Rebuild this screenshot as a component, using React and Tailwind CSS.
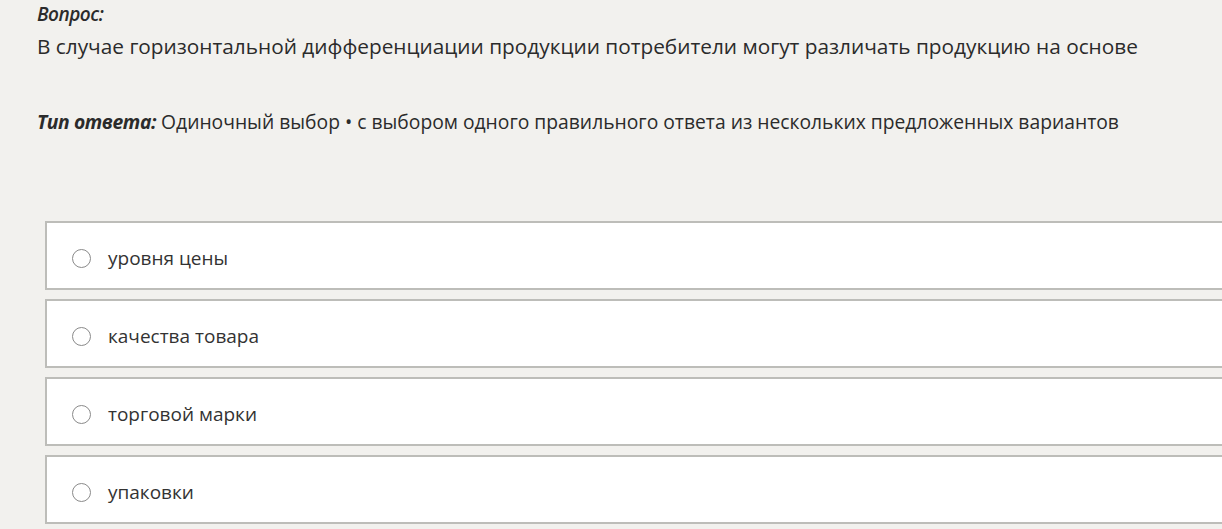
const OPTIONS = ['уровня цены', 'качества товара', 'торговой марки', 'упаковки']

export default function App() {
  return (
    <div
      className="w-[1222px] h-[529px] overflow-hidden bg-[#f2f1ee] text-[#2b2b2b]"
      style={{ fontFamily: '"Open Sans", "Noto Sans", sans-serif' }}
    >
      <div className="pl-[37px] pt-[1px]">
        <p className="text-[19px] leading-[26px] italic font-semibold tracking-[-0.5px]">Вопрос:</p>
        <p className="text-[20.8px] leading-[26px] mt-[6px]">
          В случае горизонтальной дифференциации продукции потребители могут различать продукцию на основе
        </p>
        <p className="text-[19.3px] leading-[26px] mt-[50px]">
          <span className="italic font-bold tracking-[-0.4px]">Тип ответа:</span> Одиночный выбор • с выбором одного правильного ответа из нескольких предложенных вариантов
        </p>
      </div>

      <div className="mt-[86px] ml-[45px] flex flex-col gap-[9px]">
        {OPTIONS.map(opt => (
          <label
            key={opt}
            className="h-[69px] flex items-center gap-[17px] pl-[25px] pt-[5px] bg-white border-2 border-r-0 border-[#bdbdb9]"
          >
            <span className="w-[19px] h-[19px] rounded-full border-[1.5px] border-[#8a8a8a] bg-white" />
            <span className="text-[19px] text-[#333]">{opt}</span>
          </label>
        ))}
      </div>
    </div>
  )
}
